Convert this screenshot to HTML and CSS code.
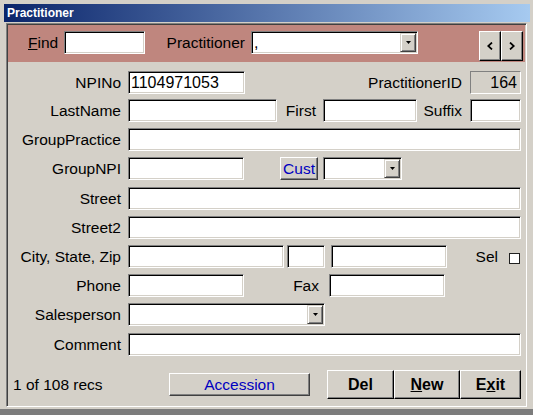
FILE: index.html
```html
<!DOCTYPE html>
<html>
<head>
<meta charset="utf-8">
<title>Practitioner</title>
<link rel="stylesheet" href="styles.css">
</head>
<body>
<div class="screen">
  <div class="titlebar">Practitioner</div>
  <div class="frame">
    <div class="band">
      <span class="find-label"><u>F</u>ind</span>
      <div class="field w81"></div>
      <span class="prac-label">Practitioner</span>
      <div class="field combo w167"><span class="val">,</span><span class="drop"><svg width="5" height="3" viewBox="0 0 5 3"><polygon points="0,0 5,0 2.5,3" fill="#000"/></svg></span></div>
      <div class="nav">
        <button class="navbtn"><svg width="6" height="8" viewBox="0 0 6 8"><polyline points="5,0.5 1.2,4 5,7.5" fill="none" stroke="#000" stroke-width="1.7"/></svg></button>
        <button class="navbtn"><svg width="6" height="8" viewBox="0 0 6 8"><polyline points="1,0.5 4.8,4 1,7.5" fill="none" stroke="#000" stroke-width="1.7"/></svg></button>
      </div>
    </div>
    <div class="form">
      <div class="row">
        <span class="lbl">NPINo</span>
        <div class="field w117">1104971053</div>
        <span class="rl w225 p8">PractitionerID</span>
        <div class="idbox">164</div>
      </div>
      <div class="row r2">
        <span class="lbl">LastName</span>
        <div class="field w149"></div>
        <span class="rl w46 p7">First</span>
        <div class="field w94"></div>
        <span class="rl w53 p8">Suffix</span>
        <div class="field w51"></div>
      </div>
      <div class="row">
        <span class="lbl">GroupPractice</span>
        <div class="field w393"></div>
      </div>
      <div class="row">
        <span class="lbl">GroupNPI</span>
        <div class="field w116"></div>
        <button class="btn cust">Cust</button>
        <div class="field combo w79 ml5"><span class="val"></span><span class="drop"><svg width="5" height="3" viewBox="0 0 5 3"><polygon points="0,0 5,0 2.5,3" fill="#000"/></svg></span></div>
      </div>
      <div class="row r7">
        <span class="lbl">Street</span>
        <div class="field w393"></div>
      </div>
      <div class="row">
        <span class="lbl">Street2</span>
        <div class="field w393"></div>
      </div>
      <div class="row">
        <span class="lbl">City, State, Zip</span>
        <div class="field w156"></div>
        <div class="field w38 ml3"></div>
        <div class="field w116 ml6"></div>
        <span class="rl w62 p11">Sel</span>
        <span class="check"></span>
      </div>
      <div class="row">
        <span class="lbl">Phone</span>
        <div class="field w116"></div>
        <span class="rl w85 p10">Fax</span>
        <div class="field w116"></div>
      </div>
      <div class="row">
        <span class="lbl">Salesperson</span>
        <div class="field combo w197"><span class="val"></span><span class="drop"><svg width="5" height="3" viewBox="0 0 5 3"><polygon points="0,0 5,0 2.5,3" fill="#000"/></svg></span></div>
      </div>
      <div class="row r7">
        <span class="lbl">Comment</span>
        <div class="field w393"></div>
      </div>
      <div class="footer">
        <span class="count">1 of 108 recs</span>
        <button class="btn accession">Accession</button>
        <button class="btn big del">Del</button>
        <button class="btn big new"><u>N</u>ew</button>
        <button class="btn big exit">E<u>x</u>it</button>
      </div>
    </div>
  </div>
  <div class="desk"></div>
</div>
</body>
</html>
```

FILE: styles.css
```css
* { box-sizing: border-box; }
html, body { margin: 0; padding: 0; }
body {
  width: 533px;
  height: 415px;
  overflow: hidden;
  background: #d4d0c8;
  font-family: "Liberation Sans", Arial, sans-serif;
  font-size: 15.5px;
  color: #000;
}
.screen {
  width: 533px;
  height: 415px;
  padding: 4px 0 0 4px;
  display: flex;
  flex-direction: column;
  background: #d4d0c8;
}
.titlebar {
  width: 526px;
  height: 18px;
  line-height: 18px;
  padding-left: 3px;
  color: #fff;
  font-weight: bold;
  font-size: 12px;
  background: linear-gradient(to right, #0a246a, #a6caf0);
}
.frame {
  margin: 1px 0 0 2px;
  width: 521px;
  height: 384px;
  border: 1px solid;
  border-color: #808080 #fff #fff #808080;
  box-shadow: inset 1px 1px #404040, inset -1px -1px #d4d0c8;
  padding: 1px;
  display: flex;
  flex-direction: column;
}
.band {
  height: 37px;
  background: #bf867e;
  display: flex;
  align-items: flex-start;
  padding-top: 6px;
}
.find-label {
  margin-left: 20px;
  width: 36px;
  line-height: 23px;
}
.prac-label {
  width: 106px;
  padding-right: 6px;
  text-align: right;
  line-height: 23px;
}
.nav { display: flex; margin-left: 61px; }
.navbtn {
  width: 22px;
  height: 30px;
  padding: 0;
  background: #d4d0c8;
  border: 1px solid;
  border-color: #fff #000 #000 #fff;
  box-shadow: inset -1px -1px #808080;
  display: flex;
  align-items: center;
  justify-content: center;
}
.form {
  padding: 9px 4px 0 0;
  display: flex;
  flex-direction: column;
}
.row {
  height: 23px;
  display: flex;
  align-items: center;
  margin-top: 6px;
}
.row:first-child { margin-top: 0; }
.row.r2 { margin-top: 5px; }
.row.r7 { margin-top: 7px; }
.lbl {
  width: 113px;
  margin-right: 7px;
  text-align: right;
  white-space: nowrap;
}
.rl { text-align: right; white-space: nowrap; }
.field {
  height: 23px;
  background: #fff;
  border: 1px solid;
  border-color: #808080 #fff #fff #808080;
  box-shadow: inset 1px 1px #000, inset -1px -1px #d4d0c8;
  font-size: 16px;
  line-height: 21px;
  padding-left: 2px;
  white-space: nowrap;
  overflow: hidden;
}
.combo {
  display: flex;
  padding: 1px 1px 1px 2px;
}
.combo .val { flex: 1; line-height: 19px; }
.drop {
  width: 16px;
  height: 100%;
  background: #d4d0c8;
  border: 1px solid;
  border-color: #d4d0c8 #404040 #404040 #d4d0c8;
  box-shadow: inset 1px 1px #fff, inset -1px -1px #808080;
  display: flex;
  align-items: center;
  justify-content: center;
}
.drop svg { display: block; }
.idbox {
  width: 51px;
  height: 23px;
  border: 1px solid;
  border-color: #808080 #fff #fff #808080;
  background: #d4d0c8;
  font-size: 16px;
  line-height: 21px;
  text-align: right;
  padding-right: 3px;
}
.check {
  width: 11px;
  height: 11px;
  background: #fff;
  border: 1px solid #202020;
  margin-top: 4px;
}
.btn {
  background: #d4d0c8;
  border: 1px solid;
  border-color: #fff #404040 #404040 #fff;
  box-shadow: inset -1px -1px #808080;
  font-family: "Liberation Sans", Arial, sans-serif;
  font-size: 15.5px;
  padding: 0;
  color: #000;
}
.cust {
  width: 38px;
  height: 23px;
  margin-left: 36px;
  color: #0000c0;
}
.footer {
  margin-top: 14px;
  height: 29px;
  display: flex;
  align-items: center;
  padding-left: 5px;
}
.count {
  width: 156px;
  font-size: 15.5px;
  white-space: nowrap;
}
.accession {
  width: 141px;
  height: 23px;
  color: #0000c0;
}
.big {
  height: 29px;
  font-weight: bold;
  font-size: 16px;
  border-color: #fff #000 #000 #fff;
}
.del { width: 67px; margin-left: 17px; }
.new { width: 66px; }
.exit { width: 61px; }
.desk {
  margin: 2px 0 0 -4px;
  width: 533px;
  height: 6px;
  background: #7c7c7c;
}
.w38 { width: 38px; }
.w46 { width: 46px; }
.w51 { width: 51px; }
.w53 { width: 53px; }
.w62 { width: 62px; }
.w79 { width: 79px; }
.w81 { width: 81px; }
.w85 { width: 85px; }
.w94 { width: 94px; }
.w116 { width: 116px; }
.w117 { width: 117px; }
.w149 { width: 149px; }
.w156 { width: 156px; }
.w167 { width: 167px; }
.w197 { width: 197px; }
.w225 { width: 225px; }
.w393 { width: 393px; }
.ml3 { margin-left: 3px; }
.ml5 { margin-left: 5px; }
.ml6 { margin-left: 6px; }
.p7 { padding-right: 7px; }
.p8 { padding-right: 8px; }
.p10 { padding-right: 10px; }
.p11 { padding-right: 11px; }
```
